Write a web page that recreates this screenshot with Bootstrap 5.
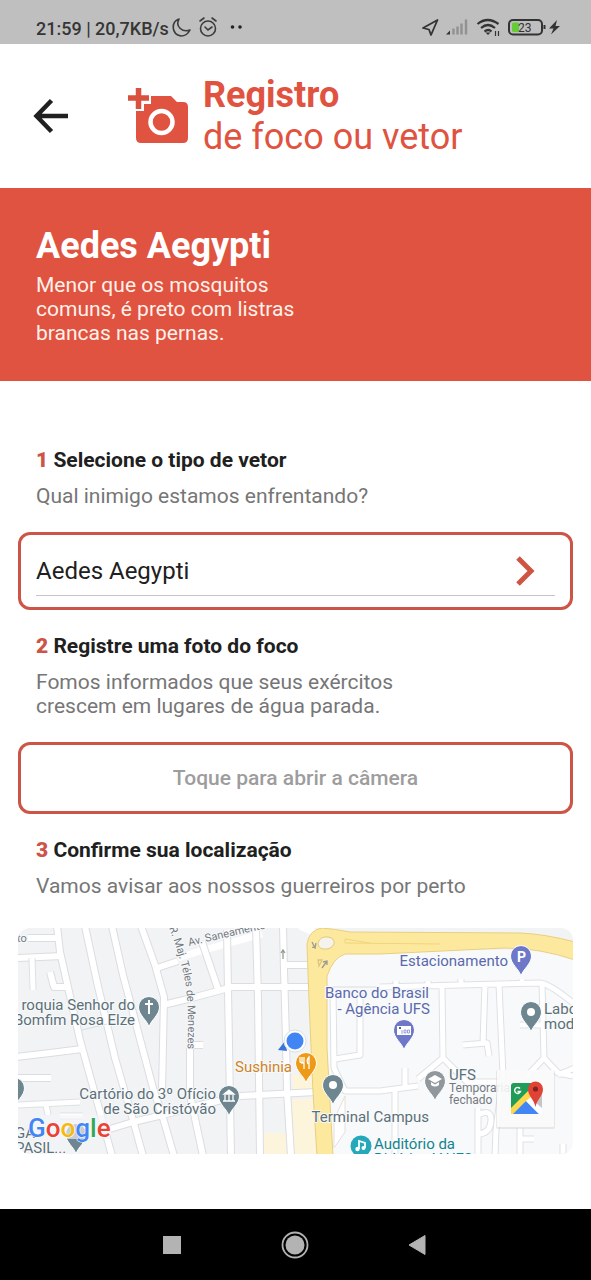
<!DOCTYPE html>
<html lang="pt-BR">
<head>
<meta charset="utf-8">
<meta name="viewport" content="width=device-width, initial-scale=1">
<title>Registro de foco ou vetor</title>
<link href="https://cdn.jsdelivr.net/npm/bootstrap@5.3.0/dist/css/bootstrap.min.css" rel="stylesheet">
<style>
  :root { --brand: #e05340; --outline: #cc5547; --ink: #202020; }
  body { font-family: Roboto, "Liberation Sans", sans-serif; font-size: 21px; line-height: 24px; color: var(--ink); background: #fff; }
  svg { display: block; flex: none; }
  .status { height: 44px; background: #bfbfbf; color: #363636; font-size: 18px; font-weight: 500; padding: 10px 30px 0 36px; }
  .app-header { height: 144px; padding: 0 32px; }
  .app-title { font-size: 36px; line-height: 42px; color: var(--brand); margin-left: 14px; }
  .brand-row { margin-left: 57px; }
  .plain { background: none; border: 0; padding: 0; color: inherit; }
  .hero { background: var(--brand); color: #fff; padding: 36px; }
  .hero h2 { font-size: 36px; line-height: 44px; font-weight: 700; margin-bottom: 5px; }
  .hint { max-width: 380px; }
  .hero p { max-width: 280px; color: #fff1ea; }
  .form-area { padding: 67px 18px 55px; }
  .step { padding: 0 18px; margin-bottom: 24px; }
  .step-title { font-size: 21px; line-height: 24px; font-weight: 700; margin-bottom: 12px; display: block; }
  .step-title b { color: var(--outline); }
  .hint { color: #767676; margin: 0; }
  .outlined { border: 3px solid var(--outline); border-radius: 12px; background: #fff; margin-bottom: 24px; }
  .picker { height: 78px; padding: 11px 15px; }
  .picker-row { height: 50px; border-bottom: 1px solid #c6c6c6; padding-right: 18px; }
  .picker select { appearance: none; border: 0; background: none; font-size: 24px; line-height: 36px; color: var(--ink); padding: 0; }
  .shoot { height: 72px; color: #9d9d9d; font-weight: 500; }
  .map-card { border-radius: 12px; overflow: hidden; margin-top: 30px; }
  .map-card svg { width: 100%; height: auto; }
  .map-card text { font-size: 15px; fill: #5b7077; stroke: #f8f9fb; stroke-width: 2px; paint-order: stroke; stroke-linejoin: round; }
  .map-card .road-name { font-size: 11px; fill: #74797f; }
  .map-card .sub-name { font-size: 12px; fill: #74797f; }
  .map-card .bank { fill: #5a69ad; }
  .map-card .food { fill: #cf8427; }
  .map-card .music { fill: #138490; }
  .map-card .wordmark { font-size: 26px; font-weight: 500; stroke: #fff; stroke-width: 1px; }
  .softkeys { height: 71px; background: #000; padding: 0 113px 0 111px; }
</style>
</head>
<body class="d-flex flex-column min-vh-100">

<div class="status d-flex align-items-start justify-content-between">
  <div class="d-flex align-items-start">
    <span class="text-nowrap lh-sm pt-1 mt-1">21:59 | 20,7KB/s</span>
    <svg width="76" height="34" viewBox="169 10 76 34" fill="none" stroke="#3c3c3c" stroke-width="1.6" stroke-linecap="round">
      <path d="M179 19C171 22 171 34 181 36C185 36 188 34 190 30C182 33 175 26 179 19Z" stroke-linejoin="round"/>
      <circle cx="208" cy="28.500" r="7.500"/><path d="M205 27l3 3 4-3M200 21l4-3M212 18l4 3"/>
      <g fill="#222" stroke="none"><circle cx="232.500" cy="27" r="1.800"/><circle cx="240" cy="27" r="1.800"/></g>
    </svg>
  </div>
  <svg width="141" height="34" viewBox="420 10 141 34" fill="none" stroke="#333">
    <path d="M437.500 20L423 28l6 1.500 2 5.500z" stroke-width="1.800" stroke-linejoin="round"/>
    <path d="M446 34.500l4-4v4z" fill="#333" stroke="none"/>
    <path d="M453.500 34.500v-6M457.500 34.500v-8M461.500 34.500v-11M466 34.500v-15" stroke="#919191" stroke-width="2.400"/>
    <path d="M477.500 24q10-8 21 0M481 28q7-6 14 0M484.500 31.500q4-3 7 0" stroke-width="2.200"/>
    <path d="M485.500 32.500h5l-2.500 2.500z" fill="#333" stroke="none"/>
    <path d="M495.500 31v5M498.500 31v5" stroke-width="1.200"/>
    <rect x="509" y="20" width="33" height="14.500" rx="4" stroke-width="2"/>
    <rect x="512" y="22.500" width="7" height="9.500" rx="1.500" fill="#65cc35" stroke="none"/>
    <path d="M544.500 25v4" stroke-width="2"/>
    <path d="M557 20l-8 8.500h4.500l-2.500 6 9-8.500h-4.500z" fill="#333" stroke="none"/>
    <text x="518" y="31.500" font-size="12" font-weight="400" fill="#333" stroke="none">23</text>
  </svg>
</div>

<header class="app-header d-flex align-items-center">
  <button class="plain" type="button" aria-label="Voltar">
    <svg width="38" height="38" viewBox="0 0 38 38" fill="none" stroke="#202020" stroke-width="4.500"><path d="M36 19H6M19.500 3.500L4.500 19l15 15.500"/></svg>
  </button>
  <div class="brand-row d-flex align-items-center">
    <svg width="62" height="56" viewBox="0 0 62 56">
      <path fill="#e05340" d="M24 8H44l6 6h6q5 0 5 5v31q0 5-5 5H14q-5 0-5-5V23H17V16H24Z"/>
      <path d="M11.500 0v21M1 10h21" stroke="#d9503f" stroke-width="5.500" fill="none"/>
      <circle cx="34.500" cy="34" r="11" fill="none" stroke="#fff" stroke-width="4.500"/>
    </svg>
    <h1 class="app-title fw-normal mb-0"><strong class="d-block">Registro</strong>de foco ou vetor</h1>
  </div>
</header>

<section class="hero">
  <h2>Aedes Aegypti</h2>
  <p class="mb-0">Menor que os mosquitos comuns, é preto com listras brancas nas pernas.</p>
</section>

<main class="form-area flex-grow-1">
  <div class="step">
    <label class="step-title" for="vetor"><b>1</b> Selecione o tipo de vetor</label>
    <p class="hint">Qual inimigo estamos enfrentando?</p>
  </div>
  <div class="outlined picker">
    <div class="picker-row d-flex align-items-center">
      <select id="vetor" class="flex-grow-1"><option>Aedes Aegypti</option></select>
      <svg width="22" height="30" viewBox="0 0 22 30" fill="none" stroke="#cf5443" stroke-width="5"><path d="M3 2l13 13L3 28"/></svg>
    </div>
  </div>

  <div class="step">
    <h2 class="step-title"><b>2</b> Registre uma foto do foco</h2>
    <p class="hint">Fomos informados que seus exércitos crescem em lugares de água parada.</p>
  </div>
  <button type="button" class="outlined shoot w-100">Toque para abrir a câmera</button>

  <div class="step mb-0">
    <h2 class="step-title"><b>3</b> Confirme sua localização</h2>
    <p class="hint mw-100">Vamos avisar aos nossos guerreiros por perto</p>
  </div>

  <div class="map-card">
    <svg viewBox="18 928 555 226" role="img" aria-label="Mapa da sua localização">
      <defs>
        <path id="pin" d="M0 20C-2 13-10.500 8-10.500 0a10.500 10.500 0 0 1 21 0C10.500 8 2 13 0 20Z" stroke="#fff" stroke-width="1"/>
        <path id="teles" d="M169 928Q178 950 184 976T187 1060"/>
        <g id="streets" fill="none" stroke-linejoin="round">
          <path d="M57 926L60 952 80 1040 100 1112 112 1156M85 926L97 982 115 1058 133 1120 143 1156M112 926L123 975 153 1088 163 1118 174 1156M141 926L155 965 164 997 162 1092"/>
          <path d="M28 938H58M16 958L62 956M50 972L54 987H66M16 1057L50 1053 82 1049M16 1078H51M110 1129L133 1122 163 1115 200 1105 240 1096 316 1092"/>
          <path d="M157 968L178 961M163 1005L188 999 214 992 232 987H312M202 942L219 992M227 930L228 990 231 1156M256 926L258 1000 260 1156M283 926L284 970 286 1040 287 1090 291 1156M284 965H312"/>
          <path d="M190 1048V1095L203 1156M190 1045H203"/>
        </g>
        <g id="lanes" fill="none" stroke-linejoin="round">
          <path d="M32 958L33 990M18 1105L80 1102M46 1104L48 1115M60 1116H83"/>
          <path d="M380 987L540 983Q550 984 573 1003M442 986L443 1058 418 1079M443 1058L467 1082H500M485 984L483 1044M463 1045L487 1043 489 1056M499 984L503 1075 496 1130 495 1156"/>
          <path d="M542 984L544 1058 526 1077M544 1058L558 1073 573 1076M558 1075L575 1068M520 1025H542M396 987V981M428 987V981M461 985V979M522 984V979"/>
          <path d="M333 990L334 1068 345 1091H380L418 1086M360 993V1055L335 1059M395 1091V1156M405 1068V1090M478 1108V1156M478 1115Q491 1108 491 1120T480 1134M520 1128V1156M520 1139H534M563 1156V1144"/>
        </g>
      </defs>
      <rect x="18" y="928" width="555" height="226" fill="#f1f3f5"/>
      <path d="M320 960L345 950H575V1156H330Z" fill="#f8f9fb"/>
      <path d="M292 1075h21v16h-20zM292 1099h22l4 56h-24zM264 1133h22l1 22h-23z" fill="#fdf4dc"/>
      <path d="M334 1120L345 1096V1132L334 1148Z" fill="#fff" stroke="#e6dfdb"/>
      <path d="M178 958L200 951 262 934" fill="none" stroke="#fff" stroke-width="7"/>
      <use href="#streets" stroke="#dadde1" stroke-width="8"/>
      <use href="#streets" stroke="#fff" stroke-width="6"/>
      <use href="#lanes" stroke="#dee1e4" stroke-width="7"/>
      <use href="#lanes" stroke="#fff" stroke-width="5"/>
      <path d="M333 987H380M82 1030L107 1024" stroke="#dadde1" fill="none"/>
      <path d="M300 926L318 934" stroke="#fff" stroke-width="7"/>
      <path d="M307 944Q309 930 322 928 335 929 350 932L520 933Q545 934 575 942V960Q540 948 505 948L380 954H345Q333 958 327 976L327 1048 333 1156H317L313 1092 309 1000Z" fill="#fde99e" stroke="#e7cf80"/>
      <path d="M440 944L345 943V939L370 943" fill="none" stroke="#efd57d"/>
      <path d="M318 943Q320 936 328 937 335 938 334 944 331 950 323 949 318 948 318 943Z" fill="#f4f3ee" stroke="#e3c978"/>
      <g fill="none" stroke="#999b95" stroke-width="1.300"><path d="M283 959V950M281 953l2-3 2 3M312 942l3 6-3-1M316 943l-1 5M322 968l5-7M323 962l4-1v4"/><path d="M318 960h4l-3 6z" stroke="#dcc57c"/></g>

      <text class="road-name" x="17" y="942">to</text>
      <text class="road-name" transform="translate(189 946) rotate(-13)">Av. Saneamento</text>
      <text class="road-name"><textPath href="#teles">R. Maj. Téles de Menezes</textPath></text>

      <g text-anchor="end">
        <text x="135" y="1010">roquia Senhor do</text><text x="135" y="1025">Bomfim Rosa Elze</text>
        <text x="216" y="1099">Cartório do 3º Ofício</text><text x="216" y="1114">de São Cristóvão</text>
        <text class="food" x="292" y="1072">Sushinia</text>
        <text class="bank" x="508" y="966">Estacionamento</text>
        <text class="bank" x="429" y="998">Banco do Brasil</text><text class="bank" x="430" y="1014">- Agência UFS</text>
        <text x="429" y="1122">Terminal Campus</text>
      </g>
      <text x="544" y="1014">Labo</text><text x="544" y="1029">mod</text>
      <text x="449" y="1080">UFS</text><text class="sub-name" x="449" y="1092">Temporaria</text><text class="sub-name" x="449" y="1104">fechado</text>
      <text class="music" x="374" y="1149">Auditório da</text><text class="music" x="374" y="1164">Didática V UFS</text>

      <use href="#pin" x="149" y="1007" fill="#6d8690"/><path d="M149 1000v14M145 1004h8" stroke="#fff" stroke-width="2"/>
      <use href="#pin" x="229" y="1096" fill="#6d8690"/><path d="M224 1094h10l-5-4zM225 1095v6M229 1095v6M233 1095v6M223 1101h12" stroke="#fff" fill="#fff" stroke-width="1.300"/>
      <use href="#pin" x="333" y="1085" fill="#6d8690"/><circle cx="333" cy="1085" r="4" fill="#fff"/>
      <use href="#pin" x="531" y="1012" fill="#6d8690"/><circle cx="531" cy="1012" r="4" fill="#fff"/>
      <use href="#pin" x="14" y="1088" fill="#6d8690"/>
      <use href="#pin" x="76" y="1134" fill="#6d8690"/>
      <rect x="30" y="1115" width="80" height="24" fill="#f4f5f7" opacity=".65"/>
      <use href="#pin" x="306" y="1063" fill="#ee9a16"/><path d="M302 1057v4q0 2 2 2v6M304 1057v5M300 1057v4q0 2 3 2M309 1069v-12q-3 3-1 7" stroke="#fff" stroke-width="1.300" fill="none"/>
      <use href="#pin" x="521" y="956" fill="#6e78c8"/><text x="517" y="962" style="font-weight:700;fill:#fff;stroke:none;font-size:14px">P</text>
      <use href="#pin" x="404" y="1030" fill="#6e78c8"/><rect x="397" y="1026" width="14" height="9" fill="#fff"/><rect x="399" y="1027" width="2" height="2" fill="#56619b"/><path d="M402 1030v4M404 1030h2v3h-2zM407.500 1030h2v3h-2z" stroke="#858ccd" stroke-width=".8" fill="none"/>
      <use href="#pin" x="435" y="1081" fill="#90989e"/><path d="M428 1079l7-4 7 4-7 4zM431 1082v3q4 3 8 0v-3l-4 2.500z" fill="#fff"/>
      <circle cx="361" cy="1146" r="10.500" fill="#25a9ba"/><path d="M359 1149v-8l6 2v5" stroke="#fff" stroke-width="1.800" fill="none"/><circle cx="357.500" cy="1149" r="2.200" fill="#fff"/><circle cx="363.500" cy="1148" r="2" fill="#fff"/>

      <path d="M278 1050L285 1041 287 1051Z" fill="#3976da"/>
      <circle cx="295" cy="1041" r="11" fill="#fff" stroke="#dcdfe4"/><circle cx="295" cy="1041" r="8.500" fill="#4285f4"/>

      <text x="15" y="1138">GA</text><text x="15" y="1153">PASIL...</text>
      <text class="wordmark" x="28" y="1137"><tspan style="fill:#4285f4">G</tspan><tspan style="fill:#ea4335">o</tspan><tspan style="fill:#f5b913">o</tspan><tspan style="fill:#4285f4">g</tspan><tspan style="fill:#34a853">l</tspan><tspan style="fill:#ea4335">e</tspan></text>

      <a href="#mapa" aria-label="Abrir no Google Maps">
        <rect x="496" y="1070" width="59" height="59" rx="2" fill="#c9ccd0" opacity=".4"/>
        <rect x="497" y="1070" width="57" height="57" rx="1" fill="#fff" opacity=".8"/>
        <path d="M514 1083H540V1114H511V1086Q511 1083 514 1083Z" fill="#e2e4e7"/>
        <path d="M514 1083H538L511 1110V1086Q511 1083 514 1083Z" fill="#1f9c57"/>
        <path d="M511 1108L532 1087 536 1092 514 1114H511Z" fill="#fcd84e"/>
        <path d="M513 1114L526 1101 539 1114Z" fill="#4285f4"/>
        <path d="M526 1101L531 1097 542 1109V1114H539Z" fill="#fff"/>
        <path d="M533 1100L542 1094V1108Z" fill="#c3c6c9"/>
        <path d="M535.500 1107C534 1099 528 1096 528 1089a7.500 7.500 0 0 1 15 0C543 1096 537 1099 535.500 1107Z" fill="#e04336"/>
        <circle cx="535.500" cy="1089" r="2.600" fill="#7e2320"/>
        <path d="M520 1088.500a3 3 0 1 0 .5 3h-3" stroke="#fff" stroke-width="1.400" fill="none"/>
      </a>
    </svg>
  </div>
</main>

<nav class="softkeys d-flex align-items-center" aria-label="Navegação do sistema">
  <div class="d-flex justify-content-between w-100 px-5">
    <button class="plain" type="button" aria-label="Recentes"><svg width="26" height="28" viewBox="0 0 26 28"><path d="M4 5h18v18H4z" fill="#b3b3b3"/></svg></button>
    <button class="plain" type="button" aria-label="Início"><svg width="28" height="28" viewBox="0 0 28 28"><circle cx="14" cy="14" r="12.500" fill="none" stroke="#b3b3b3" stroke-width="1.800"/><circle cx="14" cy="14" r="9.500" fill="#b3b3b3"/></svg></button>
    <button class="plain" type="button" aria-label="Voltar"><svg width="26" height="28" viewBox="0 0 26 28"><path d="M21 4.500v19L5 14z" fill="#b3b3b3" stroke="#b3b3b3" stroke-linejoin="round"/></svg></button>
  </div>
</nav>

<script src="https://cdn.jsdelivr.net/npm/bootstrap@5.3.0/dist/js/bootstrap.bundle.min.js"></script>
</body>
</html>
